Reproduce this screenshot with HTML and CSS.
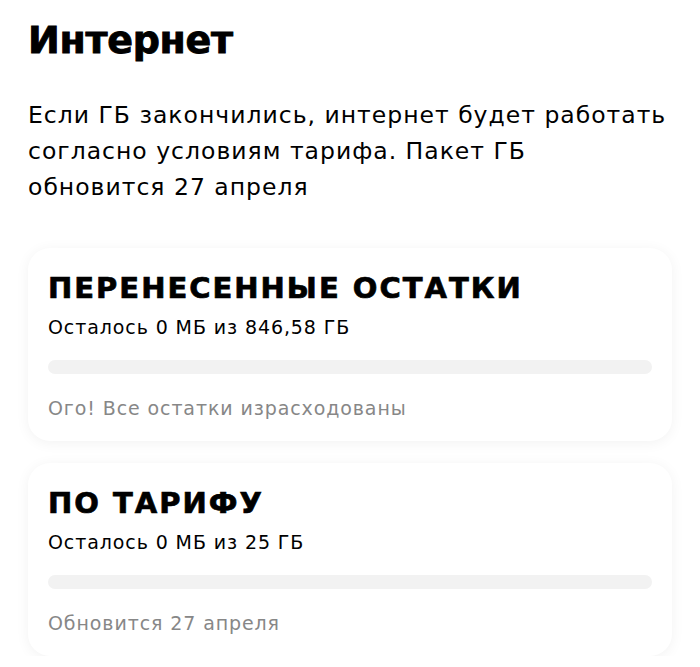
FILE: index.html
```html
<!DOCTYPE html>
<html lang="ru">
<head>
<meta charset="utf-8">
<link rel="stylesheet" href="styles.css">
</head>
<body>
<main class="page">
  <h1 class="title">Интернет</h1>
  <p class="lead">Если ГБ закончились, интернет будет работать согласно условиям тарифа. Пакет ГБ<br>обновится 27 апреля</p>
  <section class="card">
    <h2 class="card-title">ПЕРЕНЕСЕННЫЕ ОСТАТКИ</h2>
    <div class="card-sub">Осталось 0 МБ из 846,58 ГБ</div>
    <div class="bar"><div class="bar-fill" style="width:0%"></div></div>
    <div class="card-note">Ого! Все остатки израсходованы</div>
  </section>
  <section class="card">
    <h2 class="card-title">ПО ТАРИФУ</h2>
    <div class="card-sub">Осталось 0 МБ из 25 ГБ</div>
    <div class="bar"><div class="bar-fill" style="width:0%"></div></div>
    <div class="card-note">Обновится 27 апреля</div>
  </section>
</main>
</body>
</html>
```
FILE: styles.css
```css
html, body {
  margin: 0;
  padding: 0;
  background: #ffffff;
}
body {
  font-family: "DejaVu Sans", "Inter", sans-serif;
  color: #000;
}
.page {
  padding: 17px 28px 0 28px;
  display: flex;
  flex-direction: column;
}
.title {
  margin: 0;
  font-family: "DejaVu Sans", sans-serif;
  font-weight: bold;
  font-size: 38px;
  line-height: 46px;
  letter-spacing: -0.3px;
  -webkit-text-stroke: 0.9px #000;
}
.lead {
  margin: 34px 0 0 0;
  font-size: 23.5px;
  line-height: 36px;
  font-weight: 400;
  letter-spacing: 1px;
  color: #000;
}
.card {
  margin-top: 43px;
  background: #fff;
  border-radius: 22px;
  box-shadow: 0 2px 14px rgba(0, 0, 0, 0.055);
  padding: 23px 20px 21px 20px;
  display: flex;
  flex-direction: column;
}
.card + .card { margin-top: 22px; }
.card-title {
  margin: 0;
  font-family: "DejaVu Sans", sans-serif;
  font-weight: bold;
  font-size: 29px;
  line-height: 34px;
  letter-spacing: 2px;
  -webkit-text-stroke: 0.7px #000;
}
.card-sub {
  margin-top: 10px;
  font-size: 19px;
  line-height: 24px;
  letter-spacing: 0.9px;
}
.bar {
  margin-top: 21px;
  height: 14px;
  border-radius: 7px;
  background: #f2f2f2;
  overflow: hidden;
}
.bar-fill { height: 100%; background: #e30611; }
.card-note {
  margin-top: 22px;
  font-size: 19px;
  line-height: 24px;
  letter-spacing: 0.9px;
  color: #878787;
}
```
